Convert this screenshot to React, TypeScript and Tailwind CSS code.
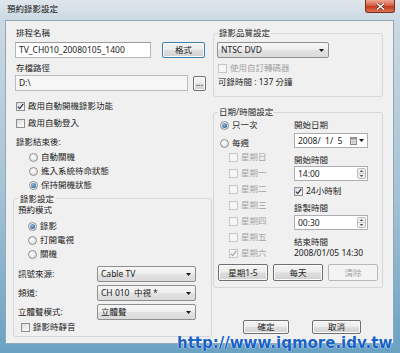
import React from "react"

type Props = { children?: React.ReactNode; className?: string }

const BTN_BG =
  "bg-[linear-gradient(180deg,#f4f4f4_0%,#ececec_48%,#dedede_52%,#d1d1d1_100%)] shadow-[inset_0_0_0_1px_#fbfbfb]"

function Btn({ children, className = "" }: Props) {
  return (
    <div className={`flex items-center justify-center rounded-[2px] border ${BTN_BG} ${className}`}>
      {children}
    </div>
  )
}

function Arrow() {
  return (
    <svg width="5" height="3" viewBox="0 0 5 3">
      <path d="M0 0h5L2.5 3z" fill="#1a1a1a" />
    </svg>
  )
}

function Combo({ value, className = "" }: { value: string; className?: string }) {
  return (
    <div
      className={`flex items-center justify-between whitespace-pre rounded-[2px] border border-[#8e8f8f] bg-[linear-gradient(180deg,#f6f6f6_0%,#eeeeee_48%,#e2e2e2_52%,#dadada_100%)] pl-[3px] pr-[4px] ${className}`}
    >
      <span>{value}</span>
      <Arrow />
    </div>
  )
}

function Check({
  label,
  checked = false,
  disabled = false,
  h = "h-[12px]",
  className = "",
}: {
  label: string
  checked?: boolean
  disabled?: boolean
  h?: string
  className?: string
}) {
  return (
    <div className={`flex items-center gap-[3px] ${h} ${className}`}>
      <span
        className={`flex h-[9px] w-[9px] items-center justify-center border ${
          disabled
            ? "border-[#c6c6c6] bg-[#f5f5f5]"
            : "border-[#8f8f8f] bg-[linear-gradient(135deg,#dadada,#ffffff)]"
        }`}
      >
        {checked && (
          <svg width="7" height="7" viewBox="0 0 7 7">
            <path
              d="M0.8 3.6 L2.7 5.6 L6.3 0.8"
              fill="none"
              stroke={disabled ? "#a8a8a8" : "#283c58"}
              strokeWidth="1.3"
            />
          </svg>
        )}
      </span>
      <span className={disabled ? "text-[#a2a2a2]" : ""}>{label}</span>
    </div>
  )
}

function Radio({ label, checked = false, className = "" }: { label: string; checked?: boolean; className?: string }) {
  return (
    <div className={`flex h-[14px] items-center gap-[3px] ${className}`}>
      <span className="flex h-[9px] w-[9px] items-center justify-center rounded-full border border-[#8f8f8f] bg-[radial-gradient(circle_at_40%_35%,#ffffff,#d4d4d4)]">
        {checked && (
          <span className="h-[5px] w-[5px] rounded-full bg-[radial-gradient(circle_at_40%_35%,#8cc0ea,#1b4a80)]" />
        )}
      </span>
      <span>{label}</span>
    </div>
  )
}

function Spin({ value, className = "" }: { value: string; className?: string }) {
  return (
    <div
      className={`flex h-[15px] w-[74px] items-center justify-between border border-[#abadb3] bg-white pl-[3px] pr-[1px] ${className}`}
    >
      <span>{value}</span>
      <svg width="9" height="11" viewBox="0 0 9 11">
        <rect x="0.5" y="0.5" width="8" height="10" rx="1.5" fill="#f3f3f3" stroke="#b9b9b9" />
        <line x1="1" y1="5.5" x2="8" y2="5.5" stroke="#cdcdcd" />
        <path d="M2.5 4L4.5 2L6.5 4Z" fill="#555" />
        <path d="M2.5 7L4.5 9L6.5 7Z" fill="#555" />
      </svg>
    </div>
  )
}

const DAYS = ["星期日", "星期一", "星期二", "星期三", "星期四", "星期五", "星期六"]

export default function App() {
  return (
    <div className="relative h-[353px] w-[400px] overflow-hidden bg-[linear-gradient(180deg,#dfe7ed_0px,#ccd9e3_20px,#a7c2d5_190px,#6aa2c2_353px)] font-['Noto_Sans','Noto_Sans_CJK_TC',sans-serif] text-[8.5px] leading-[12px] text-[#222]">
      {/* title bar */}
      <div className="flex h-[20px] items-center pb-[2px] pl-[7px] text-[#111]">預約錄影設定</div>
      <div className="absolute right-[5px] top-0 flex h-[13px] w-[30px] items-center justify-center rounded-b-[3px] border border-t-0 border-[#7a2e20] bg-[linear-gradient(180deg,#eba794_0%,#d6614a_45%,#c23a1e_55%,#dd7556_100%)]">
        <svg width="9" height="7" viewBox="0 0 9 7">
          <path d="M1 0.5L8 6.5M8 0.5L1 6.5" stroke="#5a1f14" strokeWidth="2.6" />
          <path d="M1 0.5L8 6.5M8 0.5L1 6.5" stroke="#ffffff" strokeWidth="1.5" />
        </svg>
      </div>

      {/* dialog body */}
      <div className="ml-[5px] flex h-[324px] w-[389px] border border-[#8fa8ba] bg-[#f0f0f0] pl-[7px]">
        {/* left column */}
        <div className="flex w-[200px] flex-col">
          <div className="ml-[3px] mt-[6px] h-[12px]">排程名稱</div>
          <div className="mt-[3px] flex h-[16px] items-center">
            <div className="ml-[2px] flex h-full w-[136px] items-center border border-[#b3b6bd] border-t-[#999ca3] bg-white pl-[3px]">
              TV_CH010_20080105_1400
            </div>
            <Btn className="ml-[11px] h-[16px] w-[43px] border-[#3c7fb1] shadow-[inset_0_0_0_1px_#c4e6f7]">格式</Btn>
          </div>
          <div className="ml-[3px] mt-[4px] h-[12px]">存檔路徑</div>
          <div className="mt-[1px] flex h-[16px] items-center">
            <div className="ml-[2px] flex h-full w-[173px] items-center border border-[#b8bbc1] bg-[#f6f6f6] pl-[3px]">
              {"D:\\"}
            </div>
            <Btn className="ml-[5px] h-[15px] w-[13px] border-[#707070] leading-[8px]">...</Btn>
          </div>
          <Check checked label="啟用自動開機錄影功能" className="ml-[3px] mt-[9px]" />
          <Check label="啟用自動登入" className="ml-[3px] mt-[5px]" />
          <div className="ml-[3px] mt-[7px] h-[12px]">錄影結束後:</div>
          <div className="mt-[2px] flex flex-col">
            <Radio label="自動關機" className="ml-[16px]" />
            <Radio label="進入系統待命狀態" className="ml-[16px]" />
            <Radio checked label="保持開機狀態" className="ml-[16px]" />
          </div>

          <fieldset className="mt-[1px] w-[199px] rounded-[3px] border border-[#d2d8dc] px-[4px] pb-[3px]">
            <legend className="px-[2px] leading-[11px]">錄影設定</legend>
            <div className="h-[12px]">預約模式</div>
            <div className="mt-[3px] flex flex-col">
              <Radio checked label="錄影" className="ml-[10px]" />
              <Radio label="打開電視" className="ml-[10px]" />
              <Radio label="關機" className="ml-[10px]" />
            </div>
            <div className="mt-[5px] flex items-center">
              <span className="w-[79px]">訊號來源:</span>
              <Combo value="Cable TV" className="h-[16px] w-[99px]" />
            </div>
            <div className="mt-[3px] flex items-center">
              <span className="w-[79px]">頻道:</span>
              <Combo value="CH 010  中視 *" className="h-[16px] w-[99px]" />
            </div>
            <div className="mt-[3px] flex items-center">
              <span className="w-[79px]">立體聲模式:</span>
              <Combo value="立體聲" className="h-[16px] w-[99px]" />
            </div>
            <Check label="錄影時靜音" className="ml-[3px] mt-[1px]" />
          </fieldset>
        </div>

        {/* right column */}
        <div className="flex w-[170px] flex-col">
          <fieldset className="mt-[6px] rounded-[3px] border border-[#d2d8dc] px-[4px] pb-[8px]">
            <legend className="px-[1px]">錄影品質設定</legend>
            <Combo value="NTSC DVD" className="-ml-[1px] mt-[3px] h-[16px] w-[112px]" />
            <Check disabled label="使用自訂轉碼器" className="mt-[4px]" />
            <div className="mt-[2px] h-[12px]">可錄時間 : 137 分鐘</div>
          </fieldset>

          <fieldset className="mt-[9px] rounded-[3px] border border-[#d2d8dc] px-[4px] pb-[6px]">
            <legend className="px-[1px]">日期/時間設定</legend>
            <div className="flex">
              <div className="flex w-[76px] flex-col">
                <Radio checked label="只一次" className="ml-[2px]" />
                <Radio label="每週" className="ml-[2px] mt-[4px]" />
                <div className="-mt-[1px] flex flex-col">
                  {DAYS.map((d, i) => (
                    <Check key={d} disabled checked={i === 6} label={d} h="h-[16px]" className="ml-[11px]" />
                  ))}
                </div>
              </div>
              <div className="flex flex-col">
                <div className="mt-[1px] h-[12px]">開始日期</div>
                <div className="mt-[2px] flex h-[15px] w-[74px] items-center justify-between whitespace-pre border border-[#abadb3] bg-white pl-[3px] pr-[3px]">
                  <span>{"2008/  1/  5"}</span>
                  <span className="flex items-center gap-[2px]">
                    <svg width="7" height="8" viewBox="0 0 7 8">
                      <rect x="0.5" y="0.5" width="6" height="7" fill="#ececec" stroke="#8a8a8a" />
                      <rect x="1" y="1" width="5" height="1.5" fill="#8f9aa6" />
                      <path d="M1.5 4h4M1.5 5.8h4" stroke="#a4a4a4" strokeWidth="0.8" />
                    </svg>
                    <Arrow />
                  </span>
                </div>
                <div className="mt-[6px] h-[12px]">開始時間</div>
                <Spin value="14:00" />
                <Check checked label="24小時制" className="mt-[4px]" />
                <div className="mt-[5px] h-[12px]">錄製時間</div>
                <Spin value="00:30" className="mt-[1px]" />
                <div className="mt-[6px] h-[11px] leading-[11px]">結束時間</div>
                <div className="h-[11px] leading-[11px]">2008/01/05 14:30</div>
              </div>
            </div>
            <div className="mt-[3px] flex gap-[5px]">
              <Btn className="h-[17px] w-[50px] border-[#707070]">星期1-5</Btn>
              <Btn className="h-[17px] w-[50px] border-[#707070]">每天</Btn>
              <div className="flex h-[17px] w-[50px] items-center justify-center rounded-[2px] border border-[#b5b9bc] bg-[#f4f4f4] text-[#a3a3a3]">
                清除
              </div>
            </div>
          </fieldset>

          <div className="ml-[30px] mt-[32px] flex gap-[23px]">
            <Btn className="h-[14px] w-[46px] border-[#707070]">確定</Btn>
            <Btn className="h-[14px] w-[49px] border-[#707070]">取消</Btn>
          </div>
        </div>
      </div>

      {/* watermark */}
      <div className="absolute left-[177px] top-[336px] whitespace-nowrap font-['DejaVu_Sans',sans-serif] text-[15px] font-bold leading-[15px] text-[#1762c6] [text-shadow:0_0_1px_#fff,0_0_1px_#fff]">
        http://www.iqmore.idv.tw
      </div>
    </div>
  )
}
